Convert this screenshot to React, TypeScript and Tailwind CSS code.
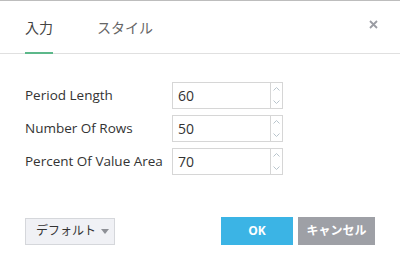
import { useState } from 'react'

const rows = [
  { label: 'Period Length', value: '60' },
  { label: 'Number Of Rows', value: '50' },
  { label: 'Percent Of Value Area', value: '70' },
]

const font = { fontFamily: '"Open Sans", "Noto Sans CJK JP", sans-serif' }

function Spinner() {
  return (
    <div className="flex w-[13px] flex-col border-l border-[#d6d6d6]">
      <button className="flex flex-1 items-center justify-center">
        <svg width="7" height="4" viewBox="0 0 7 4" fill="none" stroke="#b8c4cc" strokeWidth="1">
          <path d="M0.5 3.5 L3.5 0.5 L6.5 3.5" />
        </svg>
      </button>
      <button className="flex flex-1 items-center justify-center">
        <svg width="7" height="4" viewBox="0 0 7 4" fill="none" stroke="#b8c4cc" strokeWidth="1">
          <path d="M0.5 0.5 L3.5 3.5 L6.5 0.5" />
        </svg>
      </button>
    </div>
  )
}

export default function App() {
  const [tab, setTab] = useState(0)
  const [values, setValues] = useState(rows.map((r) => r.value))

  return (
    <div className="flex h-[270px] w-[400px] flex-col border-t border-[#bdbdbd] bg-white text-[#333]" style={font}>
      <div className="flex h-[53px] items-end border-b border-[#e0e0e0] px-[25px]">
        <button
          onClick={() => setTab(0)}
          className={`mb-[-1px] h-[52px] border-b-2 text-[14px] ${tab === 0 ? 'border-[#5cb88a] text-[#444]' : 'border-transparent text-[#666]'}`}
        >
          入力
        </button>
        <button
          onClick={() => setTab(1)}
          className={`mb-[-1px] ml-[44px] h-[52px] border-b-2 text-[14px] ${tab === 1 ? 'border-[#5cb88a] text-[#444]' : 'border-transparent text-[#666]'}`}
        >
          スタイル
        </button>
        <button className="mb-[22px] ml-auto mr-[-5px] flex h-[14px] w-[14px] items-center justify-center">
          <svg width="9" height="9" viewBox="0 0 9 9" stroke="#9a9ca3" strokeWidth="1.8">
            <path d="M1 1 L8 8 M8 1 L1 8" />
          </svg>
        </button>
      </div>

      <div className="mt-[28px] flex flex-col gap-[6px] px-[25px]">
        {rows.map((r, i) => (
          <div key={r.label} className="flex items-center">
            <span className="w-[147px] text-[13.5px] text-[#333]">{r.label}</span>
            <div className="flex h-[27px] w-[111px] border border-[#d6d6d6]">
              <input
                value={values[i]}
                onChange={(e) => setValues(values.map((v, j) => (j === i ? e.target.value : v)))}
                className="w-full min-w-0 px-[5px] text-[14px] text-[#333] outline-none"
              />
              <Spinner />
            </div>
          </div>
        ))}
      </div>

      <div className="mt-auto mb-[25px] flex items-center px-[25px]">
        <button className="flex h-[27px] w-[90px] items-center gap-[5px] whitespace-nowrap border border-[#d5d7db] bg-[#f0f1f5] pl-[10px] text-[12px] text-[#333]">
          デフォルト
          <svg width="8" height="5" viewBox="0 0 8 5">
            <path d="M0 0 L8 0 L4 5 Z" fill="#8e9096" />
          </svg>
        </button>
        <button className="ml-auto h-[28px] w-[72px] bg-[#3bb4e5] text-[12px] font-bold text-white">OK</button>
        <button className="ml-[5px] h-[28px] w-[77px] whitespace-nowrap bg-[#9ea0a6] text-[12px] font-bold text-white">キャンセル</button>
      </div>
    </div>
  )
}
